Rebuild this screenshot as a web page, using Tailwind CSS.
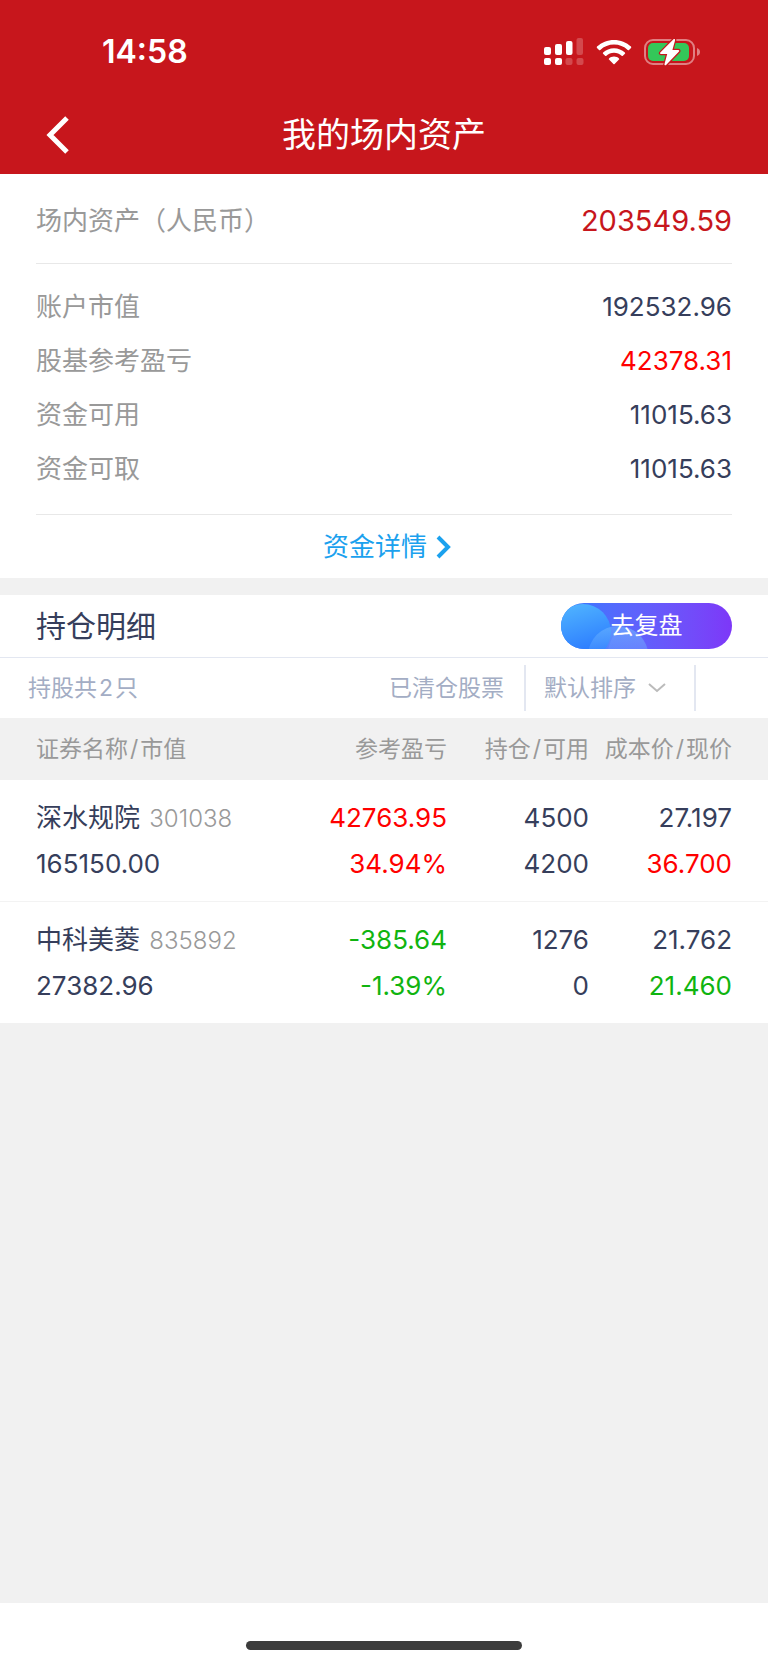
<!DOCTYPE html>
<html lang="zh-CN">
<head>
    <meta charset="UTF-8">
    <meta name="viewport" content="width=device-width, initial-scale=1.0">
    <title>我的场内资产</title>
    <script src="https://cdn.jsdelivr.net/npm/@tailwindcss/browser@4"></script>
</head>
<body class="min-h-screen flex flex-col bg-[#f1f1f1] font-['Inter','Noto_Sans_CJK_SC',sans-serif] text-[#363e5b]">
    <!-- En-tête -->
    <header class="bg-[#c7161c] text-white">
        <div class="h-24 pt-2 pl-[102px] pr-[67px] flex justify-between items-center">
            <span class="text-[32px] leading-8 font-semibold">14:58</span>
            <div class="flex items-center">
                <svg class="mr-3" width="40" height="28" viewBox="0 0 40 28" fill="#fff">
                    <rect x="0" y="9" width="7" height="8" rx="2"/>
                    <rect x="11" y="6" width="7" height="11" rx="2"/>
                    <rect x="22" y="3" width="6.500" height="14" rx="2"/>
                    <rect x="32.500" y="0" width="6.500" height="17" rx="2" opacity=".22"/>
                    <rect x="0" y="20" width="7" height="7" rx="2"/>
                    <rect x="11" y="20" width="7" height="7" rx="2"/>
                    <rect x="21.500" y="20" width="7" height="7" rx="2" opacity=".22"/>
                    <rect x="32.500" y="20" width="7" height="7" rx="2" opacity=".22"/>
                </svg>
                <svg class="mr-3" width="36" height="26" viewBox="0 0 36 26" fill="#fff">
                    <path d="M18 1C11.500 1 5.500 3.500 1 7.600c-.4.400-.4.900 0 1.300l2 2c.4.400.9.400 1.300 0C8 7.500 12.800 5.600 18 5.600s10 1.900 13.700 5.300c.4.400.9.400 1.300 0l2-2c.4-.4.4-.9 0-1.300C30.500 3.500 24.500 1 18 1z"/>
                    <path d="M18 9.300c-4.200 0-8 1.600-10.900 4.200-.4.400-.4.900 0 1.300l2 2c.4.400.9.400 1.300 0 2-1.900 4.700-3 7.600-3s5.600 1.100 7.600 3c.4.400.9.400 1.300 0l2-2c.4-.4.4-.9 0-1.300C26 10.900 22.200 9.300 18 9.300z"/>
                    <path d="M18 17.600c-2 0-3.700.7-5 1.800-.4.400-.4.900 0 1.200l4.400 4.400c.4.400.8.400 1.200 0l4.400-4.400c.4-.3.400-.8 0-1.200-1.300-1.100-3-1.800-5-1.800z"/>
                </svg>
                <svg width="57" height="28" viewBox="0 0 57 28">
                    <rect x="1" y="2" width="49" height="24" rx="8" fill="none" stroke="#fff" stroke-opacity=".45" stroke-width="2"/>
                    <path d="M53 10c2 .700 3 2.200 3 4s-1 3.300-3 4z" fill="#fff" fill-opacity=".45"/>
                    <rect x="4" y="5" width="41" height="18" rx="5" fill="#34c759"/>
                    <path d="M29.500 1.200L16.300 14.600c-.6.700-.2 1.400.6 1.400h6.300l-2.700 10c-.3 1 .9 1.700 1.600 1L35 13.600c.6-.7.2-1.600-.7-1.600h-5.900l2.700-9.800c.2-1-.9-1.700-1.600-1z" fill="#fff" stroke="#c7161c" stroke-width="2.500" paint-order="stroke"/>
                </svg>
            </div>
        </div>
        <div class="h-[78px] px-11 grid grid-cols-[1fr_auto_1fr] items-center">
            <a href="#" aria-label="返回">
                <svg width="28" height="40" viewBox="0 0 28 40" fill="none" stroke="#fff" stroke-width="5">
                    <path d="M23 3L6 20l17 17"/>
                </svg>
            </a>
            <h1 class="text-[34px] leading-10">我的场内资产</h1>
        </div>
    </header>

    <!-- Actifs -->
    <section class="bg-white px-9 text-[26px] leading-[54px]">
        <div class="h-[90px] pt-1 flex justify-between items-center border-b border-[#e8e8e8]">
            <span class="text-[#999]">场内资产（人民币）</span>
            <span class="text-[29px] text-[#c7161c]">203549.59</span>
        </div>
        <dl class="pt-4 pb-[18px] border-b border-[#e8e8e8]">
            <div class="flex justify-between"><dt class="text-[#999]">账户市值</dt><dd>192532.96</dd></div>
            <div class="flex justify-between"><dt class="text-[#999]">股基参考盈亏</dt><dd class="text-[#f00]">42378.31</dd></div>
            <div class="flex justify-between"><dt class="text-[#999]">资金可用</dt><dd>11015.63</dd></div>
            <div class="flex justify-between"><dt class="text-[#999]">资金可取</dt><dd>11015.63</dd></div>
        </dl>
        <a href="#" class="h-[63px] pl-2 flex justify-center items-center gap-2 text-[#1ba1ee]">
            资金详情
            <svg width="18" height="26" viewBox="0 0 18 26" fill="none" stroke="#1ba1ee" stroke-width="4">
                <path d="M3 3l10 10L3 23"/>
            </svg>
        </a>
    </section>

    <!-- Positions -->
    <section class="mt-[17px] bg-white">
        <div class="h-[63px] px-9 flex justify-between items-center border-b border-[#e3e7f1]">
            <h2 class="text-[30px] leading-9">持仓明细</h2>
            <button type="button" class="relative w-[171px] h-[46px] rounded-full overflow-hidden bg-linear-to-r from-[#2a7bff] to-[#7d37f8] text-white text-2xl">
                <svg class="absolute inset-0" width="171" height="46" viewBox="0 0 171 46">
                    <defs>
                        <linearGradient id="bulle" x1="0" y1="0" x2="0.300" y2="1">
                            <stop offset="0" stop-color="#52b8ff"/>
                            <stop offset="1" stop-color="#2a78ff"/>
                        </linearGradient>
                        <linearGradient id="petite" x1="0" y1="0" x2="0" y2="1">
                            <stop offset="0" stop-color="#6cb4ff" stop-opacity=".6"/>
                            <stop offset=".5" stop-color="#6cb4ff" stop-opacity=".15"/>
                        </linearGradient>
                    </defs>
                    <circle cx="22" cy="29" r="28" fill="url(#bulle)"/>
                    <circle cx="57" cy="53" r="30" fill="url(#petite)"/>
                    <path d="M47 47c2-10 6-17 13-23 14 1 24 10 27 23z" fill="#7aa8ff" fill-opacity=".25"/>
                </svg>
                <span class="relative">去复盘</span>
            </button>
        </div>
        <div class="h-[60px] pl-7 pr-[72px] flex items-center text-[23px] text-[#a3adc4]">
            <span class="grow">持股共<span class="px-0.5">2</span>只</span>
            <a href="#" class="pr-5">已清仓股票</a>
            <div class="h-[46px] w-[172px] pl-[18px] flex items-center border-x-2 border-[#e3e7f1]">
                <select aria-label="排序" class="appearance-none w-[104px] bg-transparent outline-none">
                    <option>默认排序</option>
                </select>
                <svg width="18" height="12" viewBox="0 0 18 12" fill="none" stroke="#bbb" stroke-width="2">
                    <path d="M1 2l8 7 8-7"/>
                </svg>
            </div>
        </div>
        <table class="w-full table-fixed text-right text-[26px] leading-[46px]">
            <thead class="bg-[#f1f1f1] text-[23px] text-[#999]">
                <tr class="h-[62px]">
                    <th class="pl-9 text-left font-normal">证券名称<span class="px-0.5">/</span>市值</th>
                    <th class="w-[142px] font-normal">参考盈亏</th>
                    <th class="w-[142px] font-normal">持仓<span class="px-0.5">/</span>可用</th>
                    <th class="w-[179px] pr-9 font-normal">成本价<span class="px-0.5">/</span>现价</th>
                </tr>
            </thead>
            <tbody>
                <tr class="border-b border-[#f3f3f3]">
                    <td class="pl-9 pt-[15px] pb-[14px] text-left">
                        <div>深水规院 <span class="pl-0.5 text-2xl text-[#999] font-light">301038</span></div>
                        <div>165150.00</div>
                    </td>
                    <td class="text-[#f00]"><div>42763.95</div><div>34.94%</div></td>
                    <td><div>4500</div><div>4200</div></td>
                    <td class="pr-9"><div>27.197</div><div class="text-[#f00]">36.700</div></td>
                </tr>
                <tr>
                    <td class="pl-9 pt-[15px] pb-[14px] text-left">
                        <div>中科美菱 <span class="pl-0.5 text-2xl text-[#999] font-light">835892</span></div>
                        <div>27382.96</div>
                    </td>
                    <td class="text-[#10b410]"><div>-385.64</div><div>-1.39%</div></td>
                    <td><div>1276</div><div>0</div></td>
                    <td class="pr-9"><div>21.762</div><div class="text-[#10b410]">21.460</div></td>
                </tr>
            </tbody>
        </table>
    </section>

    <!-- Barre du bas -->
    <footer class="mt-auto h-[62px] pt-[38px] bg-white">
        <div class="w-[276px] h-[9px] mx-auto rounded-full bg-[#3c3c3c]"></div>
    </footer>
</body>
</html>
